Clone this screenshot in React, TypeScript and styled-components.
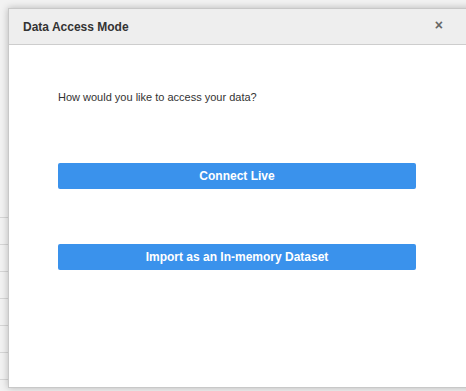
import styled, { createGlobalStyle } from 'styled-components'

const GlobalStyle = createGlobalStyle`
    html, body {
        margin: 0;
        padding: 0;
        overflow: hidden;
    }
    body {
        width: 466px;
        height: 391px;
        font-family: "Liberation Sans", Arial, sans-serif;
        background: #f4f4f4;
    }
`

export default function App() {
    return (
        <>
            <GlobalStyle />
            <Page>
                <Modal>
                    <Header>
                        <Title>Data Access Mode</Title>
                        <Close aria-label="Close">×</Close>
                    </Header>
                    <Body>
                        <Prompt>How would you like to access your data?</Prompt>
                        <Button>Connect Live</Button>
                        <Button>Import as an In-memory Dataset</Button>
                    </Body>
                </Modal>
            </Page>
        </>
    )
}

const Page = styled.div`
    width: 466px;
    height: 391px;
    padding: 8px 0 0 8px;
    box-sizing: border-box;
    background-color: #f2f2f2;
    background-image: repeating-linear-gradient(
        to bottom,
        transparent 0,
        transparent 25px,
        #d6d6d6 25px,
        #d6d6d6 26px,
        transparent 26px,
        transparent 27px
    );
    background-position: 0 192px;
    background-repeat: repeat-x;
    overflow: hidden;
`

const Modal = styled.div`
    width: 480px;
    height: 380px;
    background: #fff;
    border: 1px solid #c8c8c8;
    border-right: none;
    box-sizing: border-box;
    box-shadow: 0 0 7px rgba(0, 0, 0, 0.25);
    display: flex;
    flex-direction: column;
`

const Header = styled.div`
    height: 35px;
    background: #eeeeee;
    border-bottom: 1px solid #cdcdcd;
    display: flex;
    align-items: center;
    justify-content: space-between;
    padding: 0 45px 0 14px;
    flex-shrink: 0;
`

const Title = styled.h3`
    margin: 0;
    font-size: 12px;
    font-weight: bold;
    color: #333;
`

const Close = styled.span`
    font-size: 14px;
    font-weight: bold;
    color: #666;
    line-height: 1;
    margin-top: -3px;
`

const Body = styled.div`
    padding: 45px 0 0 49px;
    display: flex;
    flex-direction: column;
    align-items: flex-start;
`

const Prompt = styled.p`
    margin: 0 0 59px;
    font-size: 11px;
    color: #333;
    line-height: 14px;
`

const Button = styled.button`
    width: 358px;
    height: 26px;
    margin-bottom: 55px;
    border: none;
    border-radius: 2px;
    background: #3a92ec;
    color: #fff;
    font-family: "Liberation Sans", Arial, sans-serif;
    font-size: 12px;
    font-weight: bold;
    cursor: pointer;
`
